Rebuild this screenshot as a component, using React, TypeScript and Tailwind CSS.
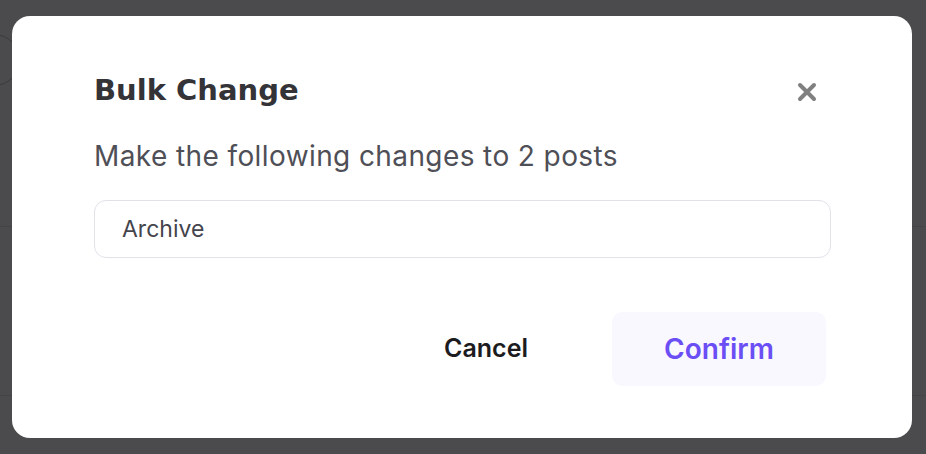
import React from "react";

// Modale "Bulk Change" affichée au-dessus d'une liste assombrie
export default function App() {
  return (
    <div
      className="relative w-[926px] h-[454px] overflow-hidden bg-[#4b4b4d] pt-4 pl-3"
      style={{ fontFamily: "Inter, 'Noto Sans', sans-serif" }}
    >
      {/* Fond : un cercle de la page derrière l'overlay */}
      <div className="absolute left-[-32px] top-[34px] w-[52px] h-[52px] rounded-full border border-[#3a3a3c]" />
      <div className="absolute left-0 right-0 top-[226px] h-px bg-[#444446]" />
      <div className="absolute left-0 right-0 top-[395px] h-px bg-[#444446]" />

      {/* Carte modale */}
      <div className="relative w-[900px] h-[422px] rounded-[18px] bg-white pt-[56px] pl-[82px] pr-[81px]">
        {/* En-tête : titre + bouton fermer */}
        <div className="flex items-center justify-between">
          <h2 className="font-['DejaVu_Sans',sans-serif] text-[29px] leading-[36px] font-bold text-[#333338]">
            Bulk Change
          </h2>
          <button className="mr-[12px] mt-1 flex items-center justify-center w-6 h-6">
            <svg width="20" height="20" viewBox="0 0 20 20" fill="none">
              <path
                d="M3 3L17 17M17 3L3 17"
                stroke="#808080"
                strokeWidth="4"
                strokeLinecap="round"
              />
            </svg>
          </button>
        </div>

        <p className="mt-[30px] text-[28px] leading-[36px] tracking-[0.4px] text-[#4f4f57]">
          Make the following changes to 2 posts
        </p>

        {/* Champ sélection de l'action */}
        <div className="mt-[26px] h-[58px] rounded-[12px] border border-[#e2e1ea] flex items-center pl-[27px] text-[23px] text-[#44444c]">
          Archive
        </div>

        {/* Actions */}
        <div className="mt-[54px] flex justify-end gap-[19px] pr-[5px]">
          <button className="w-[214px] h-[74px] rounded-[10px] text-[25px] font-semibold text-[#1c1c1e]">
            Cancel
          </button>
          <button className="w-[214px] h-[74px] rounded-[10px] bg-[#faf8ff] text-[28px] font-semibold text-[#6b4ff5]">
            Confirm
          </button>
        </div>
      </div>
    </div>
  );
}
